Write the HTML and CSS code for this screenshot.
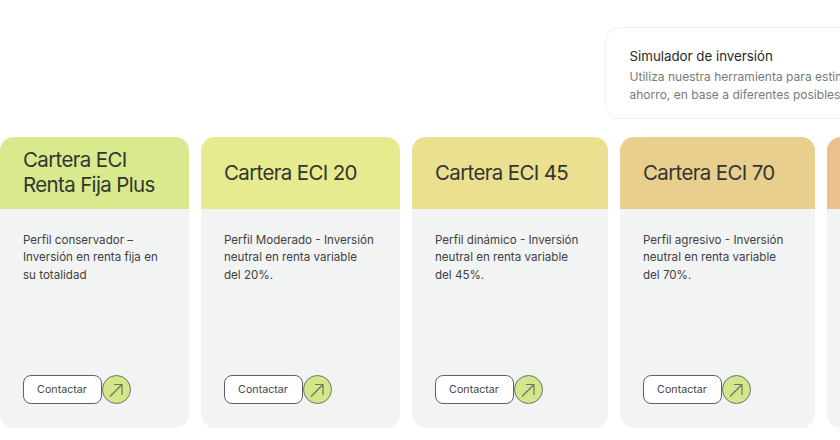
FILE: index.html
```html
<!DOCTYPE html>
<html lang="es">
<head>
    <meta charset="UTF-8">
    <meta name="viewport" content="width=device-width, initial-scale=1.0">
    <title>Carteras ECI</title>
    <link rel="stylesheet" href="styles.css">
</head>
<body>
    <div class="page">
        <div class="top-row">
            <div class="simulator">
                <h3>Simulador de inversión</h3>
                <p>Utiliza nuestra herramienta para estimar la evolución de tu<br>ahorro, en base a diferentes posibles escenarios de mercado</p>
            </div>
        </div>

        <div class="cards">
            <div class="card card-plus">
                <div class="card-head head-plus"><h2>Cartera ECI<br>Renta Fija Plus</h2></div>
                <div class="card-body">
                    <p>Perfil conservador –<br>Inversión en renta fija en<br>su totalidad</p>
                    <div class="actions">
                        <a href="#" class="btn">Contactar</a>
                        <a href="#" class="arrow"><svg viewBox="0 0 28 28" width="28" height="28"><path d="M8 20.5 L20 8.5 M12 8.5 H20 V19"/></svg></a>
                    </div>
                </div>
            </div>
            <div class="card card-20">
                <div class="card-head head-20"><h2>Cartera ECI 20</h2></div>
                <div class="card-body">
                    <p>Perfil Moderado - Inversión<br>neutral en renta variable<br>del 20%.</p>
                    <div class="actions">
                        <a href="#" class="btn">Contactar</a>
                        <a href="#" class="arrow"><svg viewBox="0 0 28 28" width="28" height="28"><path d="M8 20.5 L20 8.5 M12 8.5 H20 V19"/></svg></a>
                    </div>
                </div>
            </div>
            <div class="card card-45">
                <div class="card-head head-45"><h2>Cartera ECI 45</h2></div>
                <div class="card-body">
                    <p>Perfil dinámico - Inversión<br>neutral en renta variable<br>del 45%.</p>
                    <div class="actions">
                        <a href="#" class="btn">Contactar</a>
                        <a href="#" class="arrow"><svg viewBox="0 0 28 28" width="28" height="28"><path d="M8 20.5 L20 8.5 M12 8.5 H20 V19"/></svg></a>
                    </div>
                </div>
            </div>
            <div class="card card-70">
                <div class="card-head head-70"><h2>Cartera ECI 70</h2></div>
                <div class="card-body">
                    <p>Perfil agresivo - Inversión<br>neutral en renta variable<br>del 70%.</p>
                    <div class="actions">
                        <a href="#" class="btn">Contactar</a>
                        <a href="#" class="arrow"><svg viewBox="0 0 28 28" width="28" height="28"><path d="M8 20.5 L20 8.5 M12 8.5 H20 V19"/></svg></a>
                    </div>
                </div>
            </div>
            <div class="card card-next">
                <div class="card-head head-next"></div>
                <div class="card-body"></div>
            </div>
        </div>
    </div>
</body>
</html>
```

FILE: styles.css
```css
html, body {
    margin: 0;
    padding: 0;
    background-color: #fff;
    overflow: hidden;
}
body {
    font-family: Inter, "Open Sans", sans-serif;
    color: #3a3a3a;
}
.page {
    width: 840px;
    height: 440px;
    overflow: hidden;
}
.top-row {
    display: flex;
    height: 137px;
    padding: 27px 0 0 605px;
    box-sizing: border-box;
}
.simulator {
    flex: none;
    width: 420px;
    height: 92px;
    box-sizing: border-box;
    padding: 20px 24px 0 23.5px;
    border: 1px solid #f0f1f0;
    border-radius: 14px;
}
.simulator h3 {
    margin: 0;
    font-size: 13.3px;
    line-height: 17px;
    font-weight: 400;
    color: #26282a;
}
.simulator p {
    margin: 3px 0 0;
    font-size: 12px;
    line-height: 17.5px;
    letter-spacing: 0.02px;
    color: #777b7c;
    white-space: nowrap;
}
.cards {
    display: flex;
    gap: 12px;
    height: 291px;
}
.card {
    flex: none;
    display: flex;
    flex-direction: column;
    border-radius: 14px;
    overflow: hidden;
    background-color: #f2f4f3;
}
.card-plus { width: 189px; }
.card-20 { width: 199px; }
.card-45 { width: 196px; }
.card-70 { width: 195px; }
.card-next { width: 190px; }
.card-head {
    flex: none;
    height: 72px;
    box-sizing: border-box;
    padding: 0 0 2px 23px;
    display: flex;
    align-items: center;
}
.head-plus { background-color: #d8ea8d; }
.head-20 { background-color: #e5eb8e; }
.head-45 { background-color: #ebe08f; }
.head-70 { background-color: #e9cf8d; }
.head-next { background-color: #eac08f; }
.card-head h2 {
    margin: 0;
    font-size: 20.5px;
    line-height: 25px;
    font-weight: 400;
    letter-spacing: -0.65px;
    color: #333533;
    white-space: nowrap;
}
.card-body {
    flex: 1;
    display: flex;
    flex-direction: column;
    justify-content: space-between;
    padding: 23px 22px 24px 23px;
}
.card-body p {
    margin: 0;
    font-size: 11.6px;
    line-height: 17.3px;
    color: #3f4142;
    white-space: nowrap;
}
.actions {
    display: flex;
    align-items: center;
    margin-left: -0.5px;
}
.btn {
    width: 79px;
    height: 29px;
    box-sizing: border-box;
    display: flex;
    align-items: center;
    justify-content: center;
    border: 1px solid #5f6264;
    border-radius: 8px;
    background-color: #fff;
    color: #44474a;
    font-size: 10.7px;
    text-decoration: none;
}
.arrow {
    width: 29px;
    height: 29px;
    box-sizing: border-box;
    display: flex;
    align-items: center;
    justify-content: center;
    border: 1px solid #6e7366;
    border-radius: 50%;
    background-color: #d3e78a;
}
.arrow svg {
    flex: none;
}
.arrow path {
    fill: none;
    stroke: #6b7560;
    stroke-width: 1.2;
}
```
